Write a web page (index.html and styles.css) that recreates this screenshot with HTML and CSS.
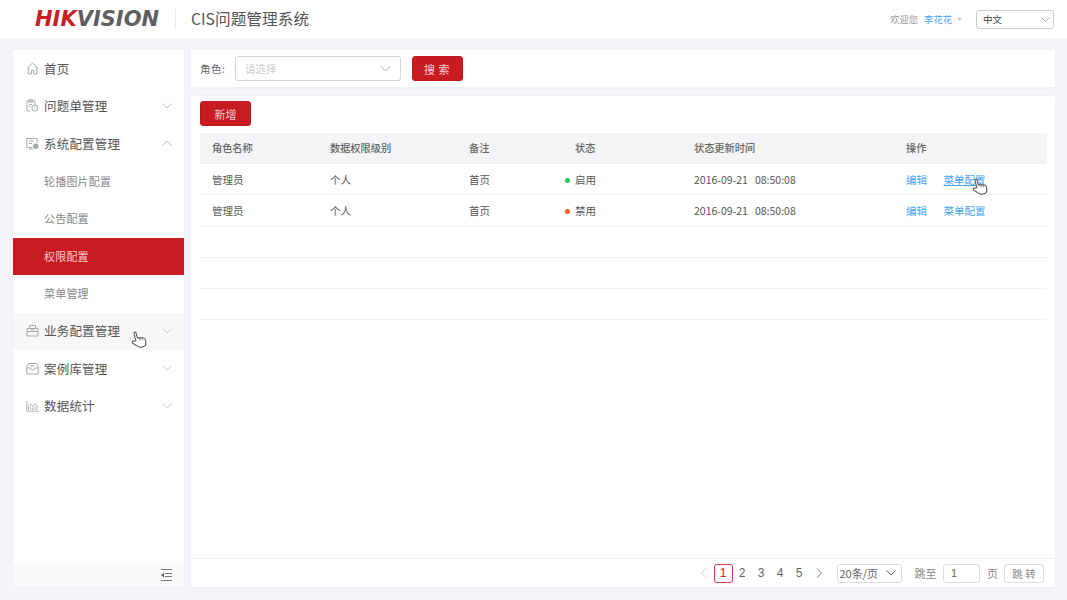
FILE: index.html
```html
<!DOCTYPE html>
<html lang="zh">
<head>
<meta charset="utf-8">
<title>CIS问题管理系统</title>
<link rel="stylesheet" href="styles.css">
</head>
<body>
<header class="topbar">
  <div class="logo"><span class="logo-red">HIK</span><span class="logo-grey">VISION</span></div>
  <div class="app-title">CIS问题管理系统</div>
  <div class="top-right">
    <span class="welcome">欢迎您</span>
    <span class="user">李花花</span>
    <svg class="user-caret" width="5" height="3" viewBox="0 0 5 3"><path d="M0 0h5L2.500 3z" fill="#c4ced8"/></svg>
    <div class="lang"><span>中文</span>
      <svg width="9" height="5" viewBox="0 0 9 5"><path d="M.5.500l4 4 4-4" fill="none" stroke="#aaa"/></svg>
    </div>
  </div>
</header>
<div class="body">
  <aside class="sidebar">
    <nav class="menu">
      <div class="item">
        <svg class="ico" viewBox="0 0 13 13"><path d="M.8 6.500L6.500 1l5.700 5.500M2.300 5.500v6.500h3V8.500h2.400V12h3V5.500" fill="none" stroke="#aaa"/></svg>
        <span>首页</span>
      </div>
      <div class="item">
        <svg class="ico" viewBox="0 0 13 13"><path d="M4.500 12H1V2h8v3.500M3 .8h4v2.400H3zM3 5.500h3M3 7.500h2" fill="none" stroke="#b0b0b0"/><circle cx="8.800" cy="9" r="3" fill="#fff" stroke="#aaa"/><path d="M8.800 7.500V9.500" stroke="#aaa"/></svg>
        <span>问题单管理</span>
        <svg class="chev" viewBox="0 0 10 6"><path d="M.5.500L5 5 9.500.500" fill="none" stroke="#bbb"/></svg>
      </div>
      <div class="item">
        <svg class="ico" viewBox="0 0 13 13"><path d="M6 10.500H.8V1.500h10.400V6M3 4h5M3 6.500h3M3 12h4" fill="none" stroke="#aaa"/><circle cx="9.700" cy="9.300" r="2.800" fill="#aaa"/></svg>
        <span>系统配置管理</span>
        <svg class="chev" viewBox="0 0 10 6"><path d="M.5 5.500L5 1l4.500 4.500" fill="none" stroke="#bbb"/></svg>
      </div>
      <div class="item sub">轮播图片配置</div>
      <div class="item sub">公告配置</div>
      <div class="item sub active">权限配置</div>
      <div class="item sub">菜单管理</div>
      <div class="item hover">
        <svg class="ico" viewBox="0 0 13 13"><path d="M1 4.500h11v7.500H1zM3.500 4.500v-3h6v3M1 7.500h11M5 5.800h3" fill="none" stroke="#aaa"/></svg>
        <span>业务配置管理</span>
        <svg class="hand hand-menu" viewBox="0 0 18 20"><path d="M6 10.500V2.700c0-1.600 2.300-1.600 2.300 0V8l5 1.200c1.800.5 2.700 1.300 2.700 3l-.5 3.300c-.3 1.800-1.400 3-3 3H9.500c-1.200 0-2-.6-2.800-1.600L2 12.300c-1-1.400.7-2.900 2-1.800z" fill="#fff" stroke="#555" stroke-width="1.100"/><path d="M10.500 8.500v3M13 9v3" stroke="#777" stroke-width=".8"/></svg>
        <svg class="chev" viewBox="0 0 10 6"><path d="M.5.500L5 5 9.500.500" fill="none" stroke="#ccc"/></svg>
      </div>
      <div class="item">
        <svg class="ico" viewBox="0 0 13 13"><path d="M.8 4.500L2.300 1.500h8.400l1.500 3v7.500H.8zM.8 6h3.700c0 2.800 4 2.800 4 0h3.700M4.500 4h4" fill="none" stroke="#aaa"/></svg>
        <span>案例库管理</span>
        <svg class="chev" viewBox="0 0 10 6"><path d="M.5.500L5 5 9.500.500" fill="none" stroke="#ccc"/></svg>
      </div>
      <div class="item">
        <svg class="ico" viewBox="0 0 13 13"><path d="M.8 2v10.200h11.700M2.500 11V6.500l2-2 2 3 2.500-3 2 2V11M4.500 11V7.500M6.500 11V8.500M9 11V7.500" fill="none" stroke="#aaa" stroke-width=".9"/></svg>
        <span>数据统计</span>
        <svg class="chev" viewBox="0 0 10 6"><path d="M.5.500L5 5 9.500.500" fill="none" stroke="#ccc"/></svg>
      </div>
    </nav>
    <div class="collapse">
      <svg width="11" height="12" viewBox="0 0 11 12"><path d="M0 .5h11M4 4.500h7M4 7.500h7M0 11.500h11" stroke="#777"/><path d="M3 3.500v5L0 6z" fill="#666"/></svg>
    </div>
  </aside>
  <main class="main">
    <section class="search card">
      <label class="field-label">角色:</label>
      <div class="select"><span>请选择</span>
        <svg width="11" height="7" viewBox="0 0 11 7"><path d="M.5 1l5 5 5-5" fill="none" stroke="#aaa"/></svg>
      </div>
      <button class="btn btn-search">搜 索</button>
    </section>
    <section class="content card">
      <div class="table-area">
        <button class="btn btn-add">新增</button>
        <table class="grid">
          <thead>
            <tr><th class="c1">角色名称</th><th class="c2">数据权限级别</th><th class="c3">备注</th><th class="c4">状态</th><th class="c5">状态更新时间</th><th class="c6">操作</th></tr>
          </thead>
          <tbody>
            <tr><td>管理员</td><td>个人</td><td>首页</td><td><i class="dot green"></i>启用</td><td>2016-09-21&nbsp;&nbsp;&nbsp;08:50:08</td><td class="ops"><a class="link">编辑</a><a class="link under">菜单配置</a></td></tr>
            <tr><td>管理员</td><td>个人</td><td>首页</td><td><i class="dot orange"></i>禁用</td><td>2016-09-21&nbsp;&nbsp;&nbsp;08:50:08</td><td class="ops"><a class="link">编辑</a><a class="link">菜单配置</a></td></tr>
            <tr><td colspan="6"></td></tr>
            <tr><td colspan="6"></td></tr>
            <tr><td colspan="6"></td></tr>
          </tbody>
        </table>
        <svg class="hand hand-table" viewBox="0 0 18 20"><path d="M6 10.500V2.700c0-1.600 2.300-1.600 2.300 0V8l5 1.200c1.800.5 2.700 1.300 2.700 3l-.5 3.300c-.3 1.800-1.400 3-3 3H9.500c-1.200 0-2-.6-2.800-1.600L2 12.300c-1-1.400.7-2.900 2-1.800z" fill="#fff" stroke="#555" stroke-width="1.100"/><path d="M10.500 8.500v3M13 9v3" stroke="#777" stroke-width=".8"/></svg>
      </div>
      <footer class="pager">
        <svg class="arrow" width="7" height="10" viewBox="0 0 7 10"><path d="M6 .5L1.500 5 6 9.500" fill="none" stroke="#ccc"/></svg>
        <span class="page current">1</span>
        <span class="page">2</span>
        <span class="page">3</span>
        <span class="page">4</span>
        <span class="page">5</span>
        <svg class="arrow next" width="7" height="10" viewBox="0 0 7 10"><path d="M1 .5L5.500 5 1 9.500" fill="none" stroke="#777"/></svg>
        <div class="size"><span>20条/页</span><svg width="10" height="6" viewBox="0 0 10 6"><path d="M.5.500L5 5 9.500.500" fill="none" stroke="#666"/></svg></div>
        <span class="jump jump-to">跳至</span>
        <div class="jump-input">1</div>
        <span class="jump jump-unit">页</span>
        <button class="jump-btn">跳 转</button>
      </footer>
    </section>
  </main>
</div>
</body>
</html>
```
FILE: styles.css
```css
* { box-sizing: border-box; }
html, body { margin: 0; height: 100%; }
body {
  width: 1067px;
  height: 600px;
  overflow: hidden;
  background: #f4f5f8;
  font-family: "Noto Sans CJK SC", "Liberation Sans", sans-serif;
  font-size: 12px;
  color: #555;
  display: flex;
  flex-direction: column;
}
.topbar {
  height: 38px;
  flex: none;
  background: #fff;
  display: flex;
  align-items: center;
  padding-left: 35px;
  padding-right: 13px;
}
.logo {
  width: 140px;
  font-family: "DejaVu Sans", sans-serif;
  font-style: italic;
  font-weight: 700;
  font-size: 21px;
  letter-spacing: 0;
  line-height: 38px;
  white-space: nowrap;
}
.logo-red { color: #c8201f; }
.logo-grey { color: #5f5f5f; }
.app-title {
  border-left: 1px solid #e8e8e8;
  padding-left: 15px;
  height: 20px;
  line-height: 20px;
  font-size: 15.700px;
  color: #555;
  white-space: nowrap;
}
.top-right {
  margin-left: auto;
  display: flex;
  align-items: center;
  font-size: 9.300px;
}
.welcome { color: #999; }
.user { color: #45a5f5; margin-left: 6px; }
.user-caret { margin-left: 5px; margin-right: 14px; }
.lang {
  width: 78px;
  height: 19px;
  border: 1px solid #ccc;
  border-radius: 3px;
  display: flex;
  align-items: center;
  justify-content: space-between;
  padding: 0 3px 0 6px;
  color: #444;
  font-size: 9.500px;
}
.body {
  flex: 1;
  min-height: 0;
  display: flex;
  gap: 7px;
  padding: 12px 12px 13px 13px;
}
.sidebar {
  width: 171px;
  flex: none;
  background: #fff;
  display: flex;
  flex-direction: column;
  box-shadow: 0 0 4px rgba(0,0,0,.03);
}
.menu { flex: 1; }
.item {
  height: 37.500px;
  display: flex;
  align-items: center;
  padding: 0 12px 1px 13px;
  font-size: 12.500px;
  letter-spacing: .2px;
  color: #555;
  position: relative;
}
.ico { width: 13px; height: 13px; margin-right: 5px; flex: none; }
.chev { width: 10px; height: 6px; margin-left: auto; flex: none; }
.sub { padding-left: 31px; font-size: 11px; color: #888; }
.active { background: #c81c22; color: #f3c9cb; }
.hover { background: #f7f7f7; }
.hand { position: absolute; width: 17px; height: 19px; transform: rotate(-15deg); }
.hand-menu { left: 117px; top: 17px; }
.collapse {
  height: 24px;
  flex: none;
  background: #fafafa;
  display: flex;
  align-items: center;
  justify-content: flex-end;
  padding-right: 12px;
}
.main {
  flex: 1;
  min-width: 0;
  display: flex;
  flex-direction: column;
  gap: 9px;
}
.card { background: #fff; box-shadow: 0 1px 4px rgba(0,0,0,.04); }
.search {
  height: 37px;
  flex: none;
  display: flex;
  align-items: center;
  padding-left: 9px;
}
.field-label { font-size: 10.500px; letter-spacing: .5px; color: #666; width: 35px; }
.select {
  width: 166px;
  height: 25px;
  border: 1px solid #d5d5d5;
  border-radius: 3px;
  display: flex;
  align-items: center;
  justify-content: space-between;
  padding: 0 9px;
  color: #ccc;
  font-size: 10.500px;
}
.btn {
  width: 51px;
  height: 25px;
  border: 1px solid #bf1820;
  border-radius: 3px;
  background: #c81c22;
  color: #f3d0d1;
  font-family: inherit;
  font-size: 11px;
  padding: 0;
}
.btn-search { margin-left: 10.500px; letter-spacing: .5px; }
.content {
  flex: 1;
  min-height: 0;
  display: flex;
  flex-direction: column;
}
.table-area {
  flex: 1;
  min-height: 0;
  padding: 5px 8px 0 9px;
  position: relative;
}
.btn-add { display: block; margin-bottom: 7px; }
.grid {
  width: 847px;
  border-collapse: collapse;
  table-layout: fixed;
  font-size: 10.500px;
}
.grid th, .grid td {
  height: 31px;
  padding: 0;
  text-align: left;
  border-bottom: 1px solid #eee;
  color: #555;
  white-space: nowrap;
}
.grid th { background: #f3f4f6; font-weight: 500; font-size: 10.200px; color: #666; height: 30px; }
.grid tbody tr:nth-child(1) td { padding-top: 1px; }
.grid tbody tr:nth-child(2) td { height: 32px; }
.grid th.c1 { width: 130px; padding-left: 12px; }
.grid th.c2 { width: 139px; }
.grid th.c3 { width: 96px; }
.grid th.c4 { width: 129px; padding-left: 10px; }
.grid th.c5 { width: 212px; }
.grid td:first-child { padding-left: 12px; }
.dot {
  display: inline-block;
  width: 5px;
  height: 5px;
  border-radius: 50%;
  margin-right: 5px;
  vertical-align: 1px;
}
.green { background: #1ccb5c; }
.orange { background: #f6601a; }
.link { color: #45a5f5; margin-right: 16.500px; }
.under { text-decoration: underline; }
.hand-table { left: 780px; top: 81px; }
.pager {
  height: 29px;
  flex: none;
  border-top: 1px solid #f1f1f1;
  display: flex;
  align-items: center;
  justify-content: flex-end;
  padding-right: 11px;
  font-size: 11px;
  color: #666;
}
.arrow { margin-right: 7px; }
.next { margin-left: 7px; margin-right: 14px; }
.page { width: 19px; height: 19px; line-height: 19px; text-align: center; font-size: 12px; font-family: "Liberation Sans", sans-serif; }
.current { border: 1px solid #d83a42; border-radius: 3px; color: #c81c22; line-height: 17px; }
.size {
  width: 65px;
  height: 19px;
  border: 1px solid #ddd;
  border-radius: 3px;
  display: flex;
  align-items: center;
  justify-content: space-between;
  padding: 0 5px 0 2px;
  font-size: 11px;
}
.jump { color: #888; font-size: 11px; }
.jump-to { margin-left: 13px; }
.jump-unit { margin-left: 7px; }
.jump-input {
  width: 37px;
  height: 19px;
  border: 1px solid #ddd;
  border-radius: 3px;
  margin-left: 6.500px;
  padding-left: 7px;
  line-height: 17px;
  font-family: "Liberation Sans", sans-serif;
}
.jump-btn {
  width: 40px;
  height: 19px;
  margin-left: 6px;
  border: 1px solid #ddd;
  border-radius: 3px;
  background: #fff;
  color: #888;
  font-family: inherit;
  font-size: 10.500px;
  padding: 0;
}
```
